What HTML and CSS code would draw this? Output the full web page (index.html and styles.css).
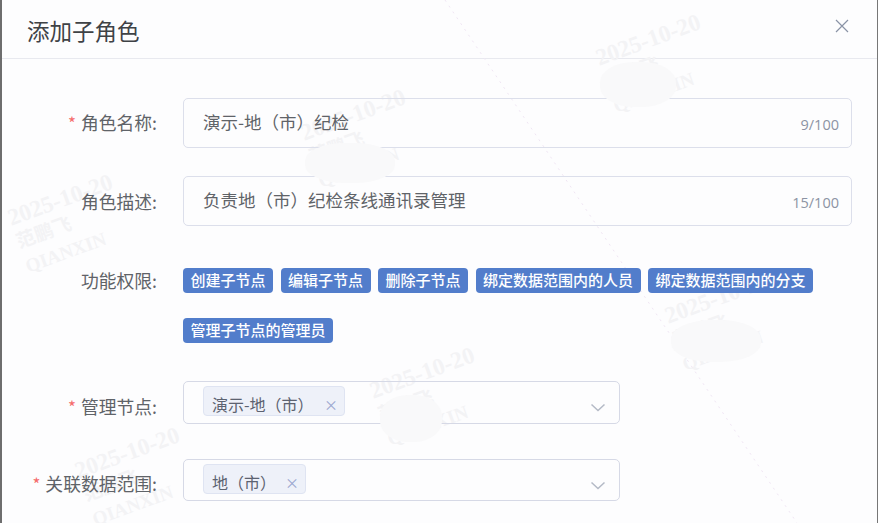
FILE: index.html
```html
<!DOCTYPE html>
<html lang="zh">
<head>
<meta charset="utf-8">
<title>添加子角色</title>
<link rel="stylesheet" href="styles.css">
</head>
<body>
<div class="dialog">
  <header class="head">
    <h1 class="title">添加子角色</h1>
    <svg class="close" viewBox="0 0 14 14" width="14" height="14"><path d="M1 1l12 12M13 1L1 13" fill="none" stroke="#8a93a6" stroke-width="1.2"/></svg>
  </header>
  <form class="form">
    <div class="row row-input">
      <div class="label"><span class="req">*</span>角色名称:</div>
      <div class="input"><span class="value">演示-地（市）纪检</span><span class="count">9/100</span></div>
    </div>
    <div class="row row-input">
      <div class="label">角色描述:</div>
      <div class="input"><span class="value">负责地（市）纪检条线通讯录管理</span><span class="count">15/100</span></div>
    </div>
    <div class="row row-tags">
      <div class="label">功能权限:</div>
      <div class="tags">
        <span class="tag">创建子节点</span>
        <span class="tag">编辑子节点</span>
        <span class="tag">删除子节点</span>
        <span class="tag">绑定数据范围内的人员</span>
        <span class="tag">绑定数据范围内的分支</span>
        <span class="tag">管理子节点的管理员</span>
      </div>
    </div>
    <div class="row row-select row-a">
      <div class="label label-low"><span class="req">*</span>管理节点:</div>
      <div class="select select-a">
        <span class="chip chip-a">演示-地（市）<span class="x">×</span></span>
        <svg class="arrow" viewBox="0 0 16 9" width="16" height="9"><path d="M1.5 1.5L8 7.5l6.5-6" fill="none" stroke="#b4bac6" stroke-width="1.5"/></svg>
      </div>
    </div>
    <div class="row row-select">
      <div class="label label-low"><span class="req">*</span>关联数据范围:</div>
      <div class="select select-b">
        <span class="chip chip-b">地（市）<span class="x">×</span></span>
        <svg class="arrow" viewBox="0 0 16 9" width="16" height="9"><path d="M1.5 1.5L8 7.5l6.5-6" fill="none" stroke="#b4bac6" stroke-width="1.5"/></svg>
      </div>
    </div>
  </form>
  <div class="mark m1">2025-10-20<br><span class="sub">范鹏飞</span><br><span class="sub">QIANXIN</span></div>
  <div class="mark m2">2025-10-20<br><span class="sub">范鹏飞</span><br><span class="sub">QIANXIN</span></div>
  <div class="mark m3">2025-10-20<br><span class="sub">范鹏飞</span><br><span class="sub">QIANXIN</span></div>
  <div class="mark m4">2025-10-20<br><span class="sub">范鹏飞</span><br><span class="sub">QIANXIN</span></div>
  <div class="mark m5">2025-10-20<br><span class="sub">范鹏飞</span><br><span class="sub">QIANXIN</span></div>
  <div class="mark m6">2025-10-20<br><span class="sub">范鹏飞</span><br><span class="sub">QIANXIN</span></div>
  <div class="blob b1"></div>
  <div class="blob b2"></div>
  <div class="blob b3"></div>
  <div class="blob b4"></div>
  <svg class="diag" viewBox="0 0 878 523" width="878" height="523"><path d="M445 0L797 523" stroke="#f0e6f4" stroke-width="1" stroke-dasharray="2 5" fill="none"/></svg>
</div>
</body>
</html>
```
FILE: styles.css
```css
* { box-sizing: border-box; }
html, body { margin: 0; height: 100%; overflow: hidden; background: #fff; }
body {
  padding: 0 1px 0 2px;
  background: linear-gradient(90deg, #6e6e6e 0 2px, #fff 2px calc(100% - 2px), #777 calc(100% - 2px));
  font-family: "Noto Sans CJK SC", "Liberation Sans", sans-serif;
  color: #5f6368;
}
.dialog {
  position: relative;
  height: 523px;
  background: #fdfdfe;
  overflow: hidden;
}
.head {
  height: 59px;
  border-bottom: 1px solid #e8e9ef;
  padding: 15px 28px 0 25px;
  display: flex;
  justify-content: space-between;
  align-items: flex-start;
}
.title {
  margin: 0;
  font-size: 22.5px;
  line-height: 30px;
  font-weight: 400;
  color: #3f4246;
}
.close { margin-top: 4px; }
.form { padding-top: 39px; }
.row { display: flex; align-items: center; position: relative; z-index: 1; }
.row-input { height: 50px; margin-bottom: 28px; }
.label {
  width: 155px;
  margin-right: 26px;
  flex: none;
  text-align: right;
  font-size: 17.8px;
  line-height: 24px;
  color: #5f6368;
  white-space: nowrap;
  padding-bottom: 1px;
}
.label-low { padding: 7px 0 0; }
.req { color: #f56c6c; margin-right: 5px; font-size: 17px; }
.input {
  width: 669px;
  height: 100%;
  border: 1px solid #dcdfeb;
  border-radius: 5px;
  padding: 0 12px 0 19px;
  display: flex;
  align-items: center;
  justify-content: space-between;
  font-size: 17.5px;
  color: #5f6368;
}
.value { margin-top: -3px; }
.count { font-size: 14.5px; color: #8c93a3; padding-top: 3px; font-family: "Open Sans", "Liberation Sans", sans-serif; }
.row-tags { align-items: flex-start; margin: 42px 0 38px; }
.tags { display: flex; flex-wrap: wrap; gap: 25px 7.5px; width: 669px; }
.tag {
  height: 25px;
  line-height: 24px;
  padding: 0 7.5px;
  border-radius: 4px;
  background: #527dcb;
  color: #fff;
  font-size: 15px;
  font-weight: 500;
  white-space: nowrap;
}
.row-a { margin-bottom: 35px; }
.select {
  position: relative;
  width: 437px;
  border: 1px solid #d6d9e6;
  border-radius: 5px;
  padding: 4px 19px;
}
.select-a { height: 43px; }
.select-b { height: 42px; }
.chip {
  display: inline-flex;
  align-items: center;
  height: 30px;
  padding: 5px 6px 0 8px;
  background: #eef1f9;
  border: 1px solid #dfe4f2;
  border-radius: 4px;
  font-size: 16px;
  color: #5c6270;
}
.chip-a { width: 142px; justify-content: space-between; }
.chip-b { width: 103px; justify-content: space-between; }
.x { color: #9aa7cf; font-size: 14px; }
.arrow { position: absolute; right: 13px; top: 21px; }
.mark {
  position: absolute;
  transform: rotate(-20deg);
  font-family: "Liberation Serif", "Noto Sans CJK SC", serif;
  font-weight: 700;
  font-size: 23.5px;
  line-height: 24px;
  color: #f3f3f5;
  white-space: nowrap;
  z-index: 0;
}
.sub { font-size: 19px; }
.m1 { left: 12px; top: 186px; }
.m2 { left: 305px; top: 101px; }
.m3 { left: 600px; top: 26px; }
.m4 { left: 79px; top: 439px; }
.m5 { left: 374px; top: 359px; }
.m6 { left: 669px; top: 284px; }
.blob { position: absolute; background: #f9f9fa; border-radius: 45%; z-index: 2; }
.b1 { left: 303px; top: 143px; width: 90px; height: 40px; }
.b2 { left: 598px; top: 62px; width: 76px; height: 45px; }
.b3 { left: 378px; top: 395px; width: 62px; height: 47px; }
.b4 { left: 669px; top: 320px; width: 90px; height: 42px; }
.diag { position: absolute; left: -2px; top: 0; z-index: 0; }
```
